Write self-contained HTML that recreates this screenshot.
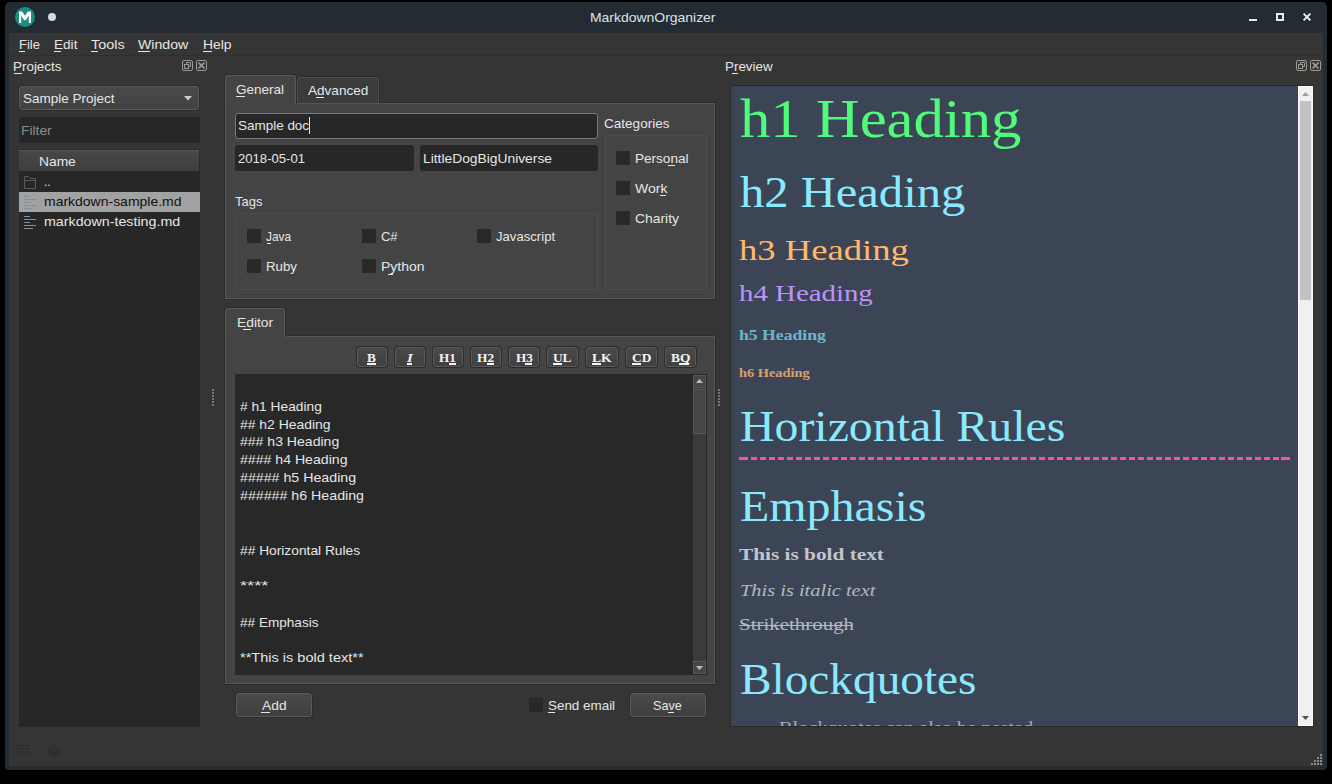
<!DOCTYPE html><html><head><meta charset="utf-8"><style>html,body{margin:0;padding:0;width:1332px;height:784px;overflow:hidden;background:#000;} body{position:relative;}</style></head><body><div style="position:absolute;left:0px;top:0px;width:1332px;height:784px;background:#000;"></div>
<div style="position:absolute;left:5px;top:2px;width:1322px;height:768px;background:#232c32;border-radius:5px 5px 4px 4px;"></div>
<div style="position:absolute;left:9px;top:33px;width:1314px;height:733px;background:#353535;"></div>
<div style="position:absolute;left:15px;top:7px;width:20px;height:20px;border-radius:50%;background:#1d8c82;"></div>
<svg style="position:absolute;left:19px;top:11px" width="12" height="12"><path d="M0 12V0.5H3.1L6 4.8L8.9 0.5H12V12H9.8V4.4L6.9 9.2H5.1L2.2 4.4V12Z" fill="#fff"/></svg>
<div style="position:absolute;left:48px;top:13px;width:8px;height:8px;border-radius:50%;background:#d3dae0;"></div>
<div style="position:absolute;left:589.60px;top:10.72px;font-family:'Liberation Sans', sans-serif;font-size:13.33px;line-height:13.33px;color:#dfe3e6;white-space:pre;transform:scaleX(1.0458);transform-origin:0 0;">MarkdownOrganizer</div>
<div style="position:absolute;left:1249px;top:19px;width:8px;height:2px;background:#e8ecef;"></div>
<div style="position:absolute;left:1276px;top:13px;width:8px;height:8px;border:2px solid #e8ecef;box-sizing:border-box;"></div>
<svg style="position:absolute;left:1302px;top:12px" width="11" height="11"><path d="M1.6 1.6L8.4 8.4M8.4 1.6L1.6 8.4" stroke="#e8ecef" stroke-width="2"/></svg>
<div style="position:absolute;left:9px;top:55px;width:1314px;height:1px;background:#2f2f2f;"></div>
<div style="position:absolute;left:19.00px;top:38.12px;font-family:'Liberation Sans', sans-serif;font-size:13.33px;line-height:13.33px;color:#e6e6e6;white-space:pre;transform:scaleX(0.9728);transform-origin:0 0;">File</div>
<div style="position:absolute;left:19px;top:51px;width:6px;height:1px;background:#e6e6e6;"></div>
<div style="position:absolute;left:54.10px;top:38.12px;font-family:'Liberation Sans', sans-serif;font-size:13.33px;line-height:13.33px;color:#e6e6e6;white-space:pre;transform:scaleX(1.0188);transform-origin:0 0;">Edit</div>
<div style="position:absolute;left:54px;top:51px;width:7px;height:1px;background:#e6e6e6;"></div>
<div style="position:absolute;left:90.70px;top:38.12px;font-family:'Liberation Sans', sans-serif;font-size:13.33px;line-height:13.33px;color:#e6e6e6;white-space:pre;transform:scaleX(1.0859);transform-origin:0 0;">Tools</div>
<div style="position:absolute;left:91px;top:51px;width:7px;height:1px;background:#e6e6e6;"></div>
<div style="position:absolute;left:138.10px;top:38.12px;font-family:'Liberation Sans', sans-serif;font-size:13.33px;line-height:13.33px;color:#e6e6e6;white-space:pre;transform:scaleX(1.0610);transform-origin:0 0;">Window</div>
<div style="position:absolute;left:138px;top:51px;width:12px;height:1px;background:#e6e6e6;"></div>
<div style="position:absolute;left:202.90px;top:38.12px;font-family:'Liberation Sans', sans-serif;font-size:13.33px;line-height:13.33px;color:#e6e6e6;white-space:pre;transform:scaleX(1.0430);transform-origin:0 0;">Help</div>
<div style="position:absolute;left:203px;top:51px;width:9px;height:1px;background:#e6e6e6;"></div>
<div style="position:absolute;left:13.00px;top:59.82px;font-family:'Liberation Sans', sans-serif;font-size:13.33px;line-height:13.33px;color:#e6e6e6;white-space:pre;transform:scaleX(1.0071);transform-origin:0 0;">Projects</div>
<div style="position:absolute;left:14px;top:73px;width:8px;height:1px;background:#e6e6e6;"></div>
<svg style="position:absolute;left:182px;top:60px" width="27" height="12"><g fill="none" stroke="#9c9893" stroke-width="1"><rect x="0.5" y="0.5" width="10" height="10" rx="1.5"/><rect x="2.5" y="4.5" width="4" height="4"/><path d="M4.5 4.5V2.5H8.5V6.5H6.5"/><rect x="14.5" y="0.5" width="10" height="10" rx="1.5"/><path d="M16.6 2.6L22.4 8.4M22.4 2.6L16.6 8.4" stroke-width="1.7"/></g></svg>
<svg style="position:absolute;left:1296px;top:60px" width="27" height="12"><g fill="none" stroke="#9c9893" stroke-width="1"><rect x="0.5" y="0.5" width="10" height="10" rx="1.5"/><rect x="2.5" y="4.5" width="4" height="4"/><path d="M4.5 4.5V2.5H8.5V6.5H6.5"/><rect x="14.5" y="0.5" width="10" height="10" rx="1.5"/><path d="M16.6 2.6L22.4 8.4M22.4 2.6L16.6 8.4" stroke-width="1.7"/></g></svg>
<div style="position:absolute;left:18px;top:85px;width:182px;height:26px;background:#2c2c2c;border-radius:4px;"></div>
<div style="position:absolute;left:19px;top:86px;width:180px;height:24px;background:linear-gradient(#4a4a4a,#424242);border:1px solid #5a5a5a;border-radius:3px;box-sizing:border-box;"></div>
<div style="position:absolute;left:23.10px;top:91.92px;font-family:'Liberation Sans', sans-serif;font-size:13.33px;line-height:13.33px;color:#e6e6e6;white-space:pre;transform:scaleX(1.0124);transform-origin:0 0;">Sample Project</div>
<svg style="position:absolute;left:184px;top:96px" width="8" height="5"><path d="M0 0H8L4 4.5Z" fill="#cfcfcf"/></svg>
<div style="position:absolute;left:19px;top:117px;width:181px;height:26px;background:#272727;border-radius:3px;"></div>
<div style="position:absolute;left:21.20px;top:123.82px;font-family:'Liberation Sans', sans-serif;font-size:13.33px;line-height:13.33px;color:#8c8c8c;white-space:pre;transform:scaleX(1.0363);transform-origin:0 0;">Filter</div>
<div style="position:absolute;left:19px;top:150px;width:181px;height:577px;background:#272727;"></div>
<div style="position:absolute;left:19px;top:149px;width:181px;height:22px;background:#2b2b2b;"></div>
<div style="position:absolute;left:19px;top:150px;width:180px;height:21px;background:linear-gradient(#474747,#3f3f3f);border-top:1px solid #555;box-sizing:border-box;"></div>
<div style="position:absolute;left:39.00px;top:154.52px;font-family:'Liberation Sans', sans-serif;font-size:13.33px;line-height:13.33px;color:#e6e6e6;white-space:pre;transform:scaleX(1.0348);transform-origin:0 0;">Name</div>
<svg style="position:absolute;left:23px;top:176px" width="14" height="13"><path d="M1.5 12.5V0.5H5.5L7 2.5H12.5V12.5Z M1.5 4.5H12.5" fill="none" stroke="#595959" stroke-width="1"/></svg>
<div style="position:absolute;left:44.20px;top:175.12px;font-family:'Liberation Sans', sans-serif;font-size:13.33px;line-height:13.33px;color:#e6e6e6;white-space:pre;transform:scaleX(0.8506);transform-origin:0 0;">..</div>
<div style="position:absolute;left:19px;top:192px;width:181px;height:20px;background:#a2a2a2;"></div>
<svg style="position:absolute;left:24px;top:196px" width="13" height="13"><g stroke="#7d93a8" stroke-width="1"><path d="M0 0.5H6M0 3.5H12M0 6.5H6M0 9.5H12M0 12.5H9"/></g></svg>
<div style="position:absolute;left:43.50px;top:195.22px;font-family:'Liberation Sans', sans-serif;font-size:13.33px;line-height:13.33px;color:#111;white-space:pre;transform:scaleX(1.0487);transform-origin:0 0;">markdown-sample.md</div>
<svg style="position:absolute;left:24px;top:216px" width="13" height="13"><g stroke="#7d93a8" stroke-width="1"><path d="M0 0.5H6M0 3.5H12M0 6.5H6M0 9.5H12M0 12.5H9"/></g></svg>
<div style="position:absolute;left:43.50px;top:215.32px;font-family:'Liberation Sans', sans-serif;font-size:13.33px;line-height:13.33px;color:#e6e6e6;white-space:pre;transform:scaleX(1.0690);transform-origin:0 0;">markdown-testing.md</div>
<svg style="position:absolute;left:16px;top:745px" width="15" height="11"><g fill="#303030"><rect x="0" y="0" width="2" height="2"/><rect x="3" y="0" width="11" height="2"/><rect x="0" y="3" width="2" height="2"/><rect x="3" y="3" width="11" height="2"/><rect x="0" y="6" width="2" height="2"/><rect x="3" y="6" width="11" height="2"/><rect x="0" y="9" width="2" height="2"/><rect x="3" y="9" width="11" height="2"/></g></svg>
<div style="position:absolute;left:48px;top:745px;width:12px;height:12px;border-radius:50%;background:#2f2f2f;"></div>
<div style="position:absolute;left:53px;top:748px;width:2px;height:4px;background:#343434;"></div>
<svg style="position:absolute;left:212px;top:389px" width="2" height="17"><g fill="#747474"><rect y="0" width="2" height="2"/><rect y="3" width="2" height="2"/><rect y="6" width="2" height="2"/><rect y="9" width="2" height="2"/><rect y="12" width="2" height="2"/><rect y="15" width="2" height="2"/></g></svg>
<svg style="position:absolute;left:718px;top:389px" width="2" height="17"><g fill="#747474"><rect y="0" width="2" height="2"/><rect y="3" width="2" height="2"/><rect y="6" width="2" height="2"/><rect y="9" width="2" height="2"/><rect y="12" width="2" height="2"/><rect y="15" width="2" height="2"/></g></svg>
<div style="position:absolute;left:224px;top:102px;width:492px;height:198px;background:#2c2c2c;border-radius:2px;"></div>
<div style="position:absolute;left:225px;top:103px;width:490px;height:196px;background:#444;border:1px solid #565656;box-sizing:border-box;"></div>
<div style="position:absolute;left:224px;top:74px;width:73px;height:30px;background:#2c2c2c;border-radius:4px 4px 0 0;"></div>
<div style="position:absolute;left:225px;top:75px;width:71px;height:30px;background:#444;border:1px solid #585858;border-bottom:none;border-radius:3px 3px 0 0;box-sizing:border-box;"></div>
<div style="position:absolute;left:296px;top:76px;width:84px;height:27px;background:#2c2c2c;border-radius:4px 4px 0 0;"></div>
<div style="position:absolute;left:297px;top:77px;width:82px;height:26px;background:#3b3b3b;border:1px solid #4e4e4e;border-bottom:none;border-radius:3px 3px 0 0;box-sizing:border-box;"></div>
<div style="position:absolute;left:235.90px;top:82.92px;font-family:'Liberation Sans', sans-serif;font-size:13.33px;line-height:13.33px;color:#e6e6e6;white-space:pre;transform:scaleX(1.0143);transform-origin:0 0;">General</div>
<div style="position:absolute;left:236px;top:96px;width:9px;height:1px;background:#e6e6e6;"></div>
<div style="position:absolute;left:307.50px;top:83.52px;font-family:'Liberation Sans', sans-serif;font-size:13.33px;line-height:13.33px;color:#e6e6e6;white-space:pre;transform:scaleX(1.0172);transform-origin:0 0;">Advanced</div>
<div style="position:absolute;left:316px;top:97px;width:8px;height:1px;background:#e6e6e6;"></div>
<div style="position:absolute;left:235px;top:113px;width:363px;height:26px;background:#272727;border:1px solid #787878;border-radius:3px;box-sizing:border-box;"></div>
<div style="position:absolute;left:237.80px;top:119.42px;font-family:'Liberation Sans', sans-serif;font-size:13.33px;line-height:13.33px;color:#e6e6e6;white-space:pre;transform:scaleX(1.0101);transform-origin:0 0;">Sample doc</div>
<div style="position:absolute;left:309px;top:117px;width:1px;height:17px;background:#e6e6e6;"></div>
<div style="position:absolute;left:235px;top:145px;width:179px;height:26px;background:#272727;border-radius:3px;"></div>
<div style="position:absolute;left:237.80px;top:151.72px;font-family:'Liberation Sans', sans-serif;font-size:13.33px;line-height:13.33px;color:#e6e6e6;white-space:pre;transform:scaleX(0.9826);transform-origin:0 0;">2018-05-01</div>
<div style="position:absolute;left:420px;top:145px;width:178px;height:26px;background:#272727;border-radius:3px;"></div>
<div style="position:absolute;left:422.80px;top:152.02px;font-family:'Liberation Sans', sans-serif;font-size:13.33px;line-height:13.33px;color:#e6e6e6;white-space:pre;transform:scaleX(1.0364);transform-origin:0 0;">LittleDogBigUniverse</div>
<div style="position:absolute;left:235.20px;top:195.02px;font-family:'Liberation Sans', sans-serif;font-size:13.33px;line-height:13.33px;color:#e6e6e6;white-space:pre;transform:scaleX(0.9731);transform-origin:0 0;">Tags</div>
<div style="position:absolute;left:236px;top:213px;width:362px;height:77px;border:1px solid #4d4d4d;border-radius:2px;box-sizing:border-box;"></div>
<div style="position:absolute;left:247px;top:229px;width:14px;height:14px;background:#282828;"></div>
<div style="position:absolute;left:265.50px;top:229.92px;font-family:'Liberation Sans', sans-serif;font-size:13.33px;line-height:13.33px;color:#e6e6e6;white-space:pre;transform:scaleX(0.8950);transform-origin:0 0;">Java</div>
<div style="position:absolute;left:362px;top:229px;width:14px;height:14px;background:#282828;"></div>
<div style="position:absolute;left:380.50px;top:229.92px;font-family:'Liberation Sans', sans-serif;font-size:13.33px;line-height:13.33px;color:#e6e6e6;white-space:pre;transform:scaleX(0.9738);transform-origin:0 0;">C#</div>
<div style="position:absolute;left:477px;top:229px;width:14px;height:14px;background:#282828;"></div>
<div style="position:absolute;left:495.50px;top:229.92px;font-family:'Liberation Sans', sans-serif;font-size:13.33px;line-height:13.33px;color:#e6e6e6;white-space:pre;transform:scaleX(0.9850);transform-origin:0 0;">Javascript</div>
<div style="position:absolute;left:247px;top:259px;width:14px;height:14px;background:#282828;"></div>
<div style="position:absolute;left:265.50px;top:259.72px;font-family:'Liberation Sans', sans-serif;font-size:13.33px;line-height:13.33px;color:#e6e6e6;white-space:pre;transform:scaleX(0.9960);transform-origin:0 0;">Ruby</div>
<div style="position:absolute;left:362px;top:259px;width:14px;height:14px;background:#282828;"></div>
<div style="position:absolute;left:380.50px;top:259.72px;font-family:'Liberation Sans', sans-serif;font-size:13.33px;line-height:13.33px;color:#e6e6e6;white-space:pre;transform:scaleX(1.0482);transform-origin:0 0;">Python</div>
<div style="position:absolute;left:267px;top:243px;width:4px;height:1px;background:#e6e6e6;"></div>
<div style="position:absolute;left:388px;top:274px;width:5px;height:1px;background:#e6e6e6;"></div>
<div style="position:absolute;left:604.00px;top:116.72px;font-family:'Liberation Sans', sans-serif;font-size:13.33px;line-height:13.33px;color:#e6e6e6;white-space:pre;transform:scaleX(1.0160);transform-origin:0 0;">Categories</div>
<div style="position:absolute;left:605px;top:135px;width:102px;height:155px;border:1px solid #4d4d4d;border-radius:2px;box-sizing:border-box;"></div>
<div style="position:absolute;left:616px;top:151px;width:14px;height:14px;background:#282828;"></div>
<div style="position:absolute;left:634.50px;top:152.12px;font-family:'Liberation Sans', sans-serif;font-size:13.33px;line-height:13.33px;color:#e6e6e6;white-space:pre;transform:scaleX(1.0169);transform-origin:0 0;">Personal</div>
<div style="position:absolute;left:616px;top:181px;width:14px;height:14px;background:#282828;"></div>
<div style="position:absolute;left:634.50px;top:182.12px;font-family:'Liberation Sans', sans-serif;font-size:13.33px;line-height:13.33px;color:#e6e6e6;white-space:pre;transform:scaleX(1.0532);transform-origin:0 0;">Work</div>
<div style="position:absolute;left:616px;top:211px;width:14px;height:14px;background:#282828;"></div>
<div style="position:absolute;left:634.50px;top:211.92px;font-family:'Liberation Sans', sans-serif;font-size:13.33px;line-height:13.33px;color:#e6e6e6;white-space:pre;transform:scaleX(1.0422);transform-origin:0 0;">Charity</div>
<div style="position:absolute;left:668px;top:165px;width:7px;height:1px;background:#e6e6e6;"></div>
<div style="position:absolute;left:660px;top:195px;width:6px;height:1px;background:#e6e6e6;"></div>
<div style="position:absolute;left:224px;top:335px;width:492px;height:350px;background:#2c2c2c;border-radius:2px;"></div>
<div style="position:absolute;left:225px;top:336px;width:490px;height:348px;background:#444;border:1px solid #565656;box-sizing:border-box;"></div>
<div style="position:absolute;left:224px;top:307px;width:62px;height:30px;background:#2c2c2c;border-radius:4px 4px 0 0;"></div>
<div style="position:absolute;left:225px;top:308px;width:60px;height:30px;background:#444;border:1px solid #585858;border-bottom:none;border-radius:3px 3px 0 0;box-sizing:border-box;"></div>
<div style="position:absolute;left:236.80px;top:315.62px;font-family:'Liberation Sans', sans-serif;font-size:13.33px;line-height:13.33px;color:#e6e6e6;white-space:pre;transform:scaleX(1.0365);transform-origin:0 0;">Editor</div>
<div style="position:absolute;left:243px;top:329px;width:8px;height:1px;background:#e6e6e6;"></div>
<div style="position:absolute;left:356px;top:346px;width:32px;height:22px;background:#2c2c2c;border-radius:4px;"></div>
<div style="position:absolute;left:357px;top:347px;width:30px;height:20px;background:linear-gradient(#494949,#404040);border:1px solid #5a5a5a;border-radius:3px;box-sizing:border-box;"></div>
<div style="position:absolute;left:367.30px;top:352.13px;font-family:'Liberation Serif', serif;font-size:12.5px;line-height:12.5px;color:#f4f4f4;white-space:pre;font-weight:700;transform:scaleX(1.0667);transform-origin:0 0;">B</div>
<div style="position:absolute;left:367px;top:363px;width:9px;height:2px;background:#f4f4f4;"></div>
<div style="position:absolute;left:394px;top:346px;width:32px;height:22px;background:#2c2c2c;border-radius:4px;"></div>
<div style="position:absolute;left:395px;top:347px;width:30px;height:20px;background:linear-gradient(#494949,#404040);border:1px solid #5a5a5a;border-radius:3px;box-sizing:border-box;"></div>
<div style="position:absolute;left:407.10px;top:352.13px;font-family:'Liberation Serif', serif;font-size:12.5px;line-height:12.5px;color:#f4f4f4;white-space:pre;font-weight:700;font-style:italic;transform:scaleX(1.1897);transform-origin:0 0;">I</div>
<div style="position:absolute;left:407px;top:363px;width:5px;height:2px;background:#f4f4f4;"></div>
<div style="position:absolute;left:432px;top:346px;width:32px;height:22px;background:#2c2c2c;border-radius:4px;"></div>
<div style="position:absolute;left:433px;top:347px;width:30px;height:20px;background:linear-gradient(#494949,#404040);border:1px solid #5a5a5a;border-radius:3px;box-sizing:border-box;"></div>
<div style="position:absolute;left:439.30px;top:352.13px;font-family:'Liberation Serif', serif;font-size:12.5px;line-height:12.5px;color:#f4f4f4;white-space:pre;font-weight:700;transform:scaleX(1.0510);transform-origin:0 0;">H1</div>
<div style="position:absolute;left:449px;top:363px;width:7px;height:2px;background:#f4f4f4;"></div>
<div style="position:absolute;left:470px;top:346px;width:32px;height:22px;background:#2c2c2c;border-radius:4px;"></div>
<div style="position:absolute;left:471px;top:347px;width:30px;height:20px;background:linear-gradient(#494949,#404040);border:1px solid #5a5a5a;border-radius:3px;box-sizing:border-box;"></div>
<div style="position:absolute;left:477.30px;top:352.13px;font-family:'Liberation Serif', serif;font-size:12.5px;line-height:12.5px;color:#f4f4f4;white-space:pre;font-weight:700;transform:scaleX(1.0698);transform-origin:0 0;">H2</div>
<div style="position:absolute;left:487px;top:363px;width:7px;height:2px;background:#f4f4f4;"></div>
<div style="position:absolute;left:508px;top:346px;width:32px;height:22px;background:#2c2c2c;border-radius:4px;"></div>
<div style="position:absolute;left:509px;top:347px;width:30px;height:20px;background:linear-gradient(#494949,#404040);border:1px solid #5a5a5a;border-radius:3px;box-sizing:border-box;"></div>
<div style="position:absolute;left:515.50px;top:352.13px;font-family:'Liberation Serif', serif;font-size:12.5px;line-height:12.5px;color:#f4f4f4;white-space:pre;font-weight:700;transform:scaleX(1.0573);transform-origin:0 0;">H3</div>
<div style="position:absolute;left:525px;top:363px;width:7px;height:2px;background:#f4f4f4;"></div>
<div style="position:absolute;left:546px;top:346px;width:33px;height:22px;background:#2c2c2c;border-radius:4px;"></div>
<div style="position:absolute;left:547px;top:347px;width:31px;height:20px;background:linear-gradient(#494949,#404040);border:1px solid #5a5a5a;border-radius:3px;box-sizing:border-box;"></div>
<div style="position:absolute;left:552.80px;top:352.13px;font-family:'Liberation Serif', serif;font-size:12.5px;line-height:12.5px;color:#f4f4f4;white-space:pre;font-weight:700;transform:scaleX(1.0647);transform-origin:0 0;">UL</div>
<div style="position:absolute;left:553px;top:363px;width:9px;height:2px;background:#f4f4f4;"></div>
<div style="position:absolute;left:585px;top:346px;width:34px;height:22px;background:#2c2c2c;border-radius:4px;"></div>
<div style="position:absolute;left:586px;top:347px;width:32px;height:20px;background:linear-gradient(#494949,#404040);border:1px solid #5a5a5a;border-radius:3px;box-sizing:border-box;"></div>
<div style="position:absolute;left:591.80px;top:352.13px;font-family:'Liberation Serif', serif;font-size:12.5px;line-height:12.5px;color:#f4f4f4;white-space:pre;font-weight:700;transform:scaleX(1.0907);transform-origin:0 0;">LK</div>
<div style="position:absolute;left:592px;top:363px;width:9px;height:2px;background:#f4f4f4;"></div>
<div style="position:absolute;left:625px;top:346px;width:33px;height:22px;background:#2c2c2c;border-radius:4px;"></div>
<div style="position:absolute;left:626px;top:347px;width:31px;height:20px;background:linear-gradient(#494949,#404040);border:1px solid #5a5a5a;border-radius:3px;box-sizing:border-box;"></div>
<div style="position:absolute;left:631.60px;top:352.13px;font-family:'Liberation Serif', serif;font-size:12.5px;line-height:12.5px;color:#f4f4f4;white-space:pre;font-weight:700;transform:scaleX(1.0685);transform-origin:0 0;">CD</div>
<div style="position:absolute;left:632px;top:363px;width:9px;height:2px;background:#f4f4f4;"></div>
<div style="position:absolute;left:664px;top:346px;width:33px;height:22px;background:#2c2c2c;border-radius:4px;"></div>
<div style="position:absolute;left:665px;top:347px;width:31px;height:20px;background:linear-gradient(#494949,#404040);border:1px solid #5a5a5a;border-radius:3px;box-sizing:border-box;"></div>
<div style="position:absolute;left:670.60px;top:352.13px;font-family:'Liberation Serif', serif;font-size:12.5px;line-height:12.5px;color:#f4f4f4;white-space:pre;font-weight:700;transform:scaleX(1.0740);transform-origin:0 0;">BQ</div>
<div style="position:absolute;left:679px;top:363px;width:10px;height:2px;background:#f4f4f4;"></div>
<div style="position:absolute;left:235px;top:374px;width:472px;height:301px;background:#282828;"></div>
<div style="position:absolute;left:693px;top:375px;width:13px;height:299px;background:#3b3b3b;"></div>
<div style="position:absolute;left:693px;top:375px;width:13px;height:13px;background:#464646;border:1px solid #575757;box-sizing:border-box;"></div>
<svg style="position:absolute;left:696px;top:379px" width="7" height="4"><path d="M0 4H7L3.5 0Z" fill="#bbb"/></svg>
<div style="position:absolute;left:693px;top:389px;width:13px;height:45px;background:#464646;border:1px solid #575757;box-sizing:border-box;"></div>
<div style="position:absolute;left:693px;top:661px;width:13px;height:13px;background:#464646;border:1px solid #575757;box-sizing:border-box;"></div>
<svg style="position:absolute;left:696px;top:666px" width="7" height="4"><path d="M0 0H7L3.5 4Z" fill="#bbb"/></svg>
<div style="position:absolute;left:239.90px;top:399.72px;font-family:'Liberation Sans', sans-serif;font-size:13.33px;line-height:13.33px;color:#e6e6e6;white-space:pre;transform:scaleX(1.0316);transform-origin:0 0;"># h1 Heading</div>
<div style="position:absolute;left:239.90px;top:417.62px;font-family:'Liberation Sans', sans-serif;font-size:13.33px;line-height:13.33px;color:#e6e6e6;white-space:pre;transform:scaleX(1.0448);transform-origin:0 0;">## h2 Heading</div>
<div style="position:absolute;left:239.90px;top:435.42px;font-family:'Liberation Sans', sans-serif;font-size:13.33px;line-height:13.33px;color:#e6e6e6;white-space:pre;transform:scaleX(1.0539);transform-origin:0 0;">### h3 Heading</div>
<div style="position:absolute;left:239.90px;top:453.32px;font-family:'Liberation Sans', sans-serif;font-size:13.33px;line-height:13.33px;color:#e6e6e6;white-space:pre;transform:scaleX(1.0588);transform-origin:0 0;">#### h4 Heading</div>
<div style="position:absolute;left:239.90px;top:471.12px;font-family:'Liberation Sans', sans-serif;font-size:13.33px;line-height:13.33px;color:#e6e6e6;white-space:pre;transform:scaleX(1.0656);transform-origin:0 0;">##### h5 Heading</div>
<div style="position:absolute;left:239.90px;top:488.92px;font-family:'Liberation Sans', sans-serif;font-size:13.33px;line-height:13.33px;color:#e6e6e6;white-space:pre;transform:scaleX(1.0657);transform-origin:0 0;">###### h6 Heading</div>
<div style="position:absolute;left:239.90px;top:543.72px;font-family:'Liberation Sans', sans-serif;font-size:13.33px;line-height:13.33px;color:#e6e6e6;white-space:pre;transform:scaleX(1.0326);transform-origin:0 0;">## Horizontal Rules</div>
<div style="position:absolute;left:239.90px;top:579.22px;font-family:'Liberation Sans', sans-serif;font-size:13.33px;line-height:13.33px;color:#e6e6e6;white-space:pre;transform:scaleX(1.3735);transform-origin:0 0;">****</div>
<div style="position:absolute;left:239.90px;top:615.72px;font-family:'Liberation Sans', sans-serif;font-size:13.33px;line-height:13.33px;color:#e6e6e6;white-space:pre;transform:scaleX(1.0189);transform-origin:0 0;">## Emphasis</div>
<div style="position:absolute;left:239.90px;top:651.42px;font-family:'Liberation Sans', sans-serif;font-size:13.33px;line-height:13.33px;color:#e6e6e6;white-space:pre;transform:scaleX(1.0905);transform-origin:0 0;">**This is bold text**</div>
<div style="position:absolute;left:235px;top:692px;width:78px;height:26px;background:#2c2c2c;border-radius:4px;"></div>
<div style="position:absolute;left:236px;top:693px;width:76px;height:24px;background:linear-gradient(#4a4a4a,#3f3f3f);border:1px solid #5a5a5a;border-radius:3px;box-sizing:border-box;"></div>
<div style="position:absolute;left:261.60px;top:698.62px;font-family:'Liberation Sans', sans-serif;font-size:13.33px;line-height:13.33px;color:#e6e6e6;white-space:pre;transform:scaleX(1.0372);transform-origin:0 0;">Add</div>
<div style="position:absolute;left:261px;top:712px;width:9px;height:1px;background:#e6e6e6;"></div>
<div style="position:absolute;left:529px;top:698px;width:14px;height:14px;background:#282828;"></div>
<div style="position:absolute;left:547.80px;top:698.52px;font-family:'Liberation Sans', sans-serif;font-size:13.33px;line-height:13.33px;color:#e6e6e6;white-space:pre;transform:scaleX(1.0062);transform-origin:0 0;">Send email</div>
<div style="position:absolute;left:548px;top:712px;width:7px;height:1px;background:#e6e6e6;"></div>
<div style="position:absolute;left:629px;top:692px;width:78px;height:26px;background:#2c2c2c;border-radius:4px;"></div>
<div style="position:absolute;left:630px;top:693px;width:76px;height:24px;background:linear-gradient(#4a4a4a,#3f3f3f);border:1px solid #5a5a5a;border-radius:3px;box-sizing:border-box;"></div>
<div style="position:absolute;left:653.40px;top:698.62px;font-family:'Liberation Sans', sans-serif;font-size:13.33px;line-height:13.33px;color:#e6e6e6;white-space:pre;transform:scaleX(0.9477);transform-origin:0 0;">Save</div>
<div style="position:absolute;left:668px;top:712px;width:6px;height:1px;background:#e6e6e6;"></div>
<div style="position:absolute;left:725.20px;top:59.52px;font-family:'Liberation Sans', sans-serif;font-size:13.33px;line-height:13.33px;color:#e6e6e6;white-space:pre;transform:scaleX(1.0041);transform-origin:0 0;">Preview</div>
<div style="position:absolute;left:732px;top:73px;width:6px;height:1px;background:#e6e6e6;"></div>
<div style="position:absolute;left:730px;top:85px;width:584px;height:642px;background:#2a2a2a;"></div>
<div style="position:absolute;left:731px;top:86px;width:567px;height:640px;background:#3c4556;"></div>
<div style="position:absolute;left:1298px;top:86px;width:15px;height:640px;background:#f0f0f0;border:1px solid #fafafa;box-sizing:border-box;"></div>
<div style="position:absolute;left:1300px;top:101px;width:11px;height:199px;background:#c2c2c2;"></div>
<svg style="position:absolute;left:1302px;top:92px" width="7" height="4"><path d="M0 4H7L3.5 0Z" fill="#a0a0a0"/></svg>
<svg style="position:absolute;left:1302px;top:716px" width="7" height="4"><path d="M0 0H7L3.5 4Z" fill="#505050"/></svg>
<div style="position:absolute;left:1320px;top:754px;width:2px;height:2px;background:#8a8a8a;"></div>
<div style="position:absolute;left:1317px;top:757px;width:2px;height:2px;background:#8a8a8a;"></div>
<div style="position:absolute;left:1320px;top:757px;width:2px;height:2px;background:#8a8a8a;"></div>
<div style="position:absolute;left:1314px;top:760px;width:2px;height:2px;background:#8a8a8a;"></div>
<div style="position:absolute;left:1317px;top:760px;width:2px;height:2px;background:#8a8a8a;"></div>
<div style="position:absolute;left:1320px;top:760px;width:2px;height:2px;background:#8a8a8a;"></div>
<div style="position:absolute;left:1311px;top:763px;width:2px;height:2px;background:#8a8a8a;"></div>
<div style="position:absolute;left:1314px;top:763px;width:2px;height:2px;background:#8a8a8a;"></div>
<div style="position:absolute;left:1317px;top:763px;width:2px;height:2px;background:#8a8a8a;"></div>
<div style="position:absolute;left:1320px;top:763px;width:2px;height:2px;background:#8a8a8a;"></div>
<div style="position:absolute;left:739.60px;top:92.17px;font-family:'Liberation Serif', serif;font-size:54px;line-height:54px;color:#50fa7b;white-space:pre;transform:scaleX(1.1236);transform-origin:0 0;">h1 Heading</div>
<div style="position:absolute;left:739.50px;top:170.65px;font-family:'Liberation Serif', serif;font-size:44px;line-height:44px;color:#8be9fd;white-space:pre;transform:scaleX(1.1036);transform-origin:0 0;">h2 Heading</div>
<div style="position:absolute;left:738.70px;top:234.57px;font-family:'Liberation Serif', serif;font-size:30px;line-height:30px;color:#ffb86c;white-space:pre;transform:scaleX(1.2203);transform-origin:0 0;">h3 Heading</div>
<div style="position:absolute;left:738.50px;top:282.24px;font-family:'Liberation Serif', serif;font-size:23px;line-height:23px;color:#bd93f9;white-space:pre;transform:scaleX(1.2543);transform-origin:0 0;">h4 Heading</div>
<div style="position:absolute;left:738.50px;top:328.67px;font-family:'Liberation Serif', serif;font-size:14px;line-height:14px;color:#6bb5cf;white-space:pre;font-weight:700;transform:scaleX(1.2620);transform-origin:0 0;">h5 Heading</div>
<div style="position:absolute;left:738.50px;top:366.95px;font-family:'Liberation Serif', serif;font-size:12px;line-height:12px;color:#d8a06a;white-space:pre;font-weight:700;transform:scaleX(1.1963);transform-origin:0 0;">h6 Heading</div>
<div style="position:absolute;left:739.60px;top:404.65px;font-family:'Liberation Serif', serif;font-size:44px;line-height:44px;color:#8be9fd;white-space:pre;transform:scaleX(1.0865);transform-origin:0 0;">Horizontal Rules</div>
<div style="position:absolute;left:742px;top:457px;width:548px;height:3px;background:repeating-linear-gradient(90deg,#f550b4 0 6px,transparent 6px 9px);"></div>
<div style="position:absolute;left:739px;top:457px;width:3px;height:3px;background:#f550b4;"></div>
<div style="position:absolute;left:1281px;top:457px;width:9px;height:3px;background:#f550b4;"></div>
<div style="position:absolute;left:739.60px;top:484.65px;font-family:'Liberation Serif', serif;font-size:44px;line-height:44px;color:#8be9fd;white-space:pre;transform:scaleX(1.0894);transform-origin:0 0;">Emphasis</div>
<div style="position:absolute;left:738.80px;top:546.14px;font-family:'Liberation Serif', serif;font-size:17.5px;line-height:17.5px;color:#c2c5cc;white-space:pre;font-weight:700;transform:scaleX(1.2164);transform-origin:0 0;">This is bold text</div>
<div style="position:absolute;left:740.00px;top:581.54px;font-family:'Liberation Serif', serif;font-size:17.5px;line-height:17.5px;color:#b4b8c0;white-space:pre;font-style:italic;transform:scaleX(1.1654);transform-origin:0 0;">This is italic text</div>
<div style="position:absolute;left:738.50px;top:615.84px;font-family:'Liberation Serif', serif;font-size:17.5px;line-height:17.5px;color:#b4b8c0;white-space:pre;transform:scaleX(1.1958);transform-origin:0 0;">Strikethrough</div>
<div style="position:absolute;left:739px;top:625px;width:114px;height:1px;background:#b4b8c0;"></div>
<div style="position:absolute;left:740.30px;top:658.45px;font-family:'Liberation Serif', serif;font-size:44px;line-height:44px;color:#8be9fd;white-space:pre;transform:scaleX(1.0751);transform-origin:0 0;">Blockquotes</div>
<div style="position:absolute;left:731px;top:710px;width:567px;height:16px;overflow:hidden;">
<div style="position:absolute;left:48.00px;top:9.34px;font-family:'Liberation Serif', serif;font-size:17.5px;line-height:17.5px;color:#a4a8b0;white-space:pre;transform:scaleX(1.1628);transform-origin:0 0;">Blockquotes can also be nested</div>
</div></body></html>
